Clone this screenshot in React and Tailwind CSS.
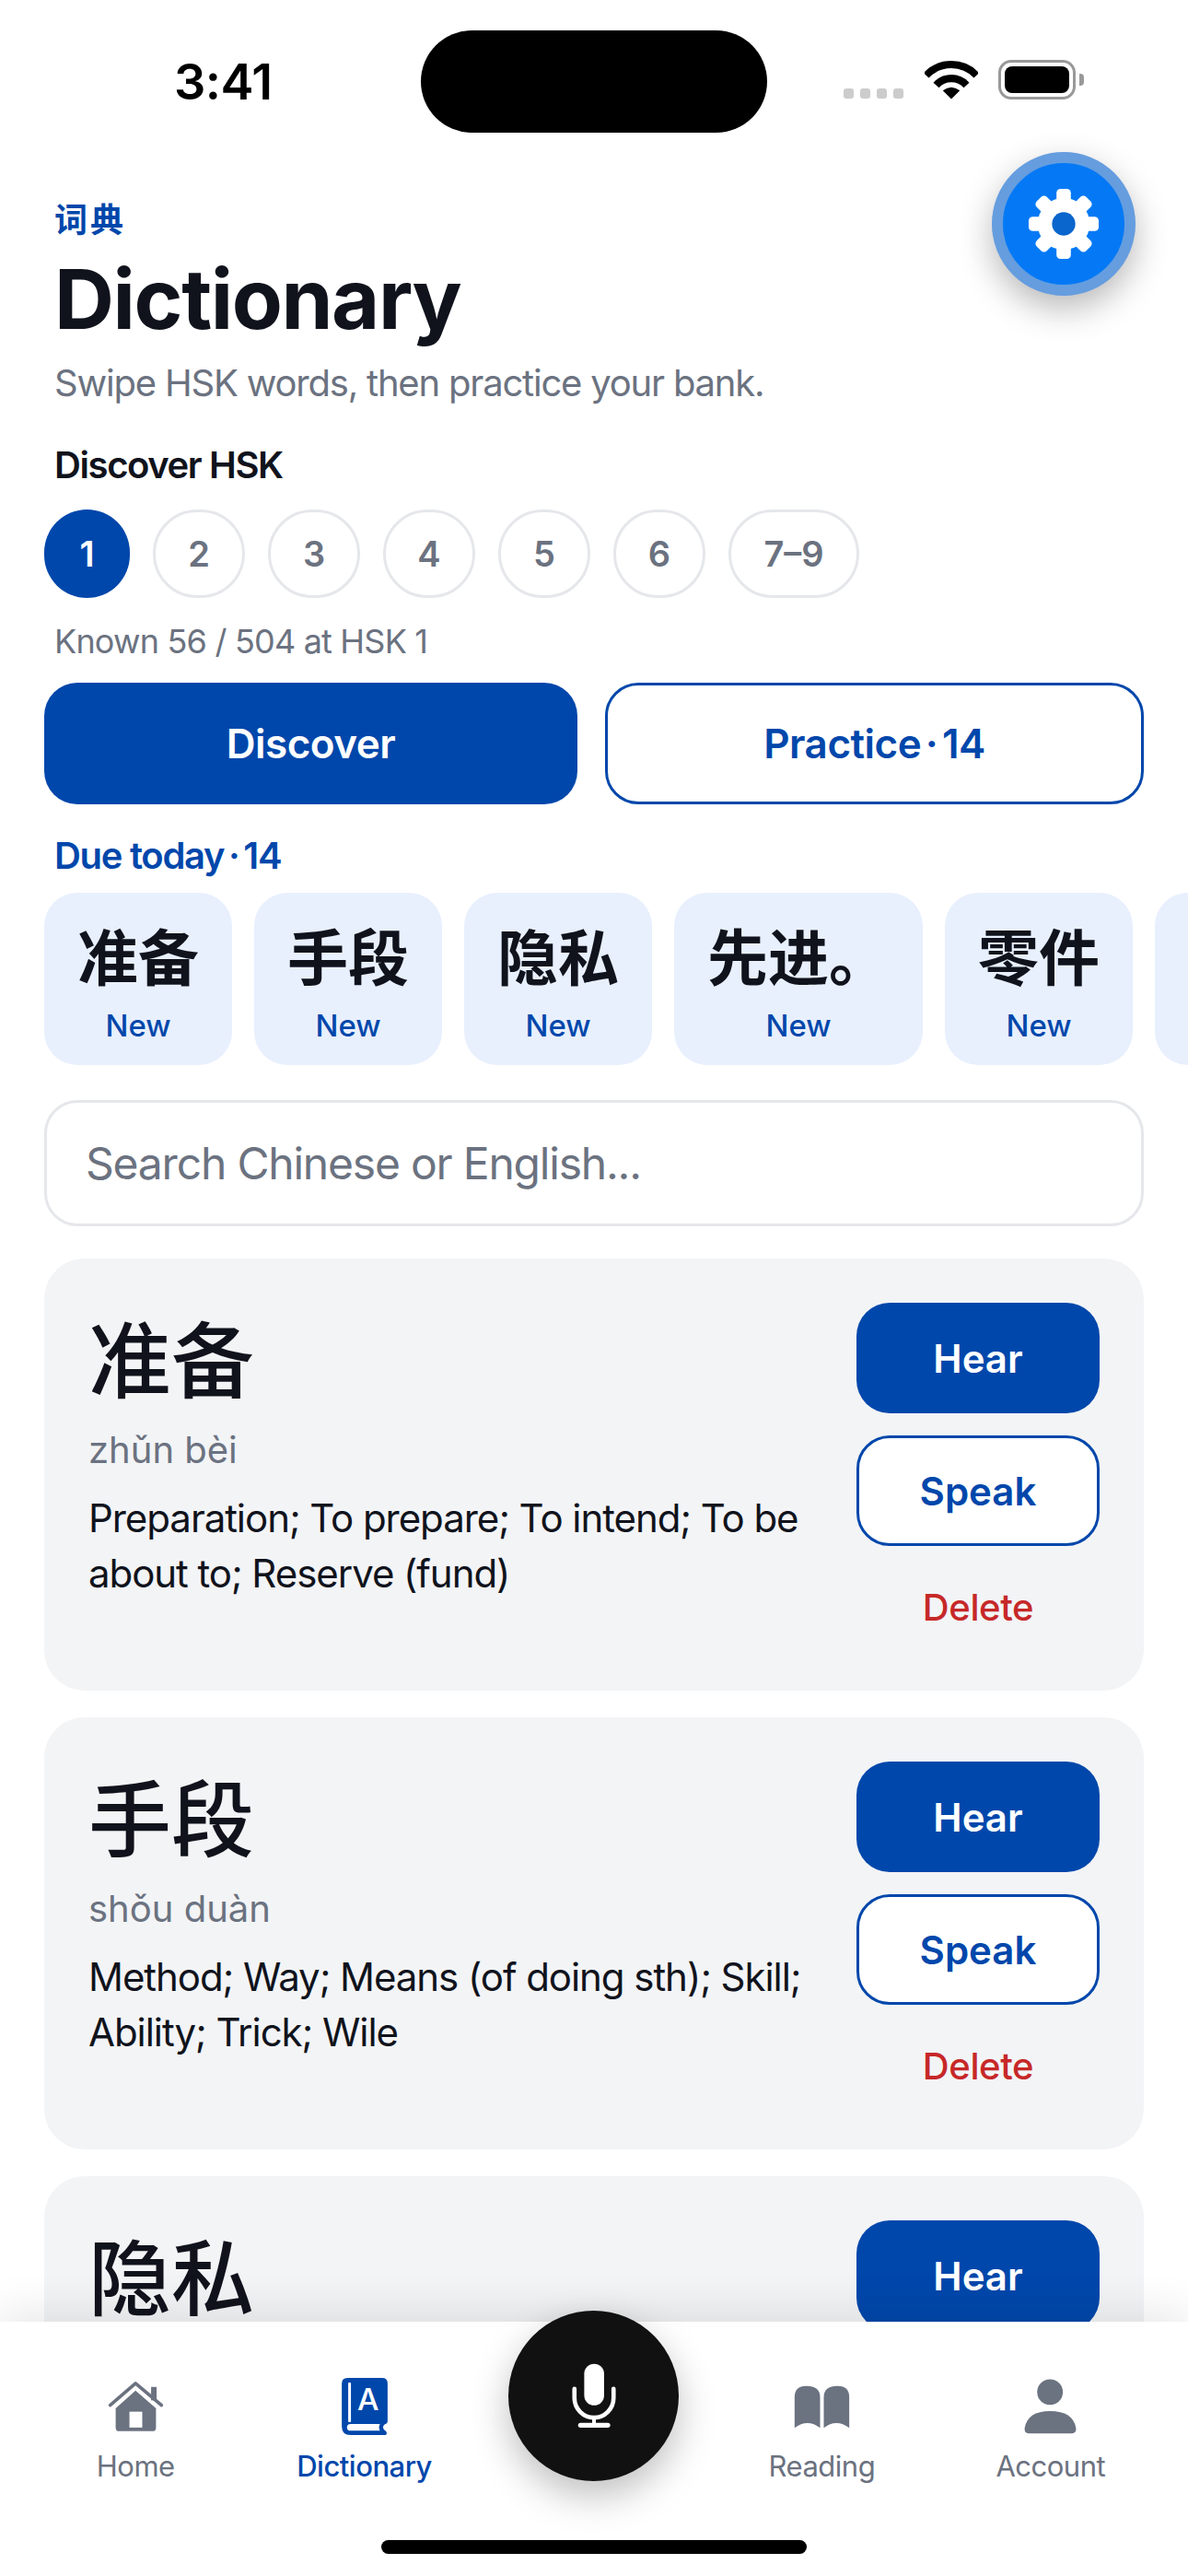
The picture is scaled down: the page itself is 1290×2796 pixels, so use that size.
import React from 'react';

const LEVELS = ['2', '3', '4', '5', '6', '7–9'];
const DUE = ['准备', '手段', '隐私', '先进。', '零件'];
const WORDS = [
  { han: '准备', pinyin: 'zhǔn bèi', def: 'Preparation; To prepare; To intend; To be about to; Reserve (fund)' },
  { han: '手段', pinyin: 'shǒu duàn', def: 'Method; Way; Means (of doing sth); Skill; Ability; Trick; Wile' },
  { han: '隐私' },
];

const Wifi = () => (
  <svg viewBox="370 133 176 130" className="w-[58px] h-[43px]" fill="none" stroke="#000">
    <path d="M375 184A114 114 0 0 1 541 184" strokeWidth="24" />
    <path d="M408 216A68 68 0 0 1 508 216" strokeWidth="25" />
    <path d="M458 262L430 234Q458 212 486 234Z" fill="#000" stroke="none" />
  </svg>
);

const Gear = () => (
  <svg viewBox="-40 -40 80 80" className="w-[78px] h-[78px]">
    {[0, 45, 90, 135, 180, 225, 270, 315].map((a) => (
      <rect key={a} x="-8" y="-39" width="16" height="24" rx="4.5" fill="#fff" transform={`rotate(${a})`} />
    ))}
    <circle r="29" fill="#fff" />
    <circle r="13" fill="#0a66cc" />
  </svg>
);

const HomeIcon = () => (
  <svg viewBox="82 72 184 168" className="w-[61px] h-[56px]">
    <rect x="224" y="92" width="18" height="44" fill="#6b7280" />
    <path d="M173 104L240 162V225Q240 237 228 237H120Q108 237 108 225V162Z" fill="#6b7280" />
    <path d="M90 152L173 80L258 152" fill="none" stroke="#6b7280" strokeWidth="11" strokeLinecap="round" strokeLinejoin="round" />
    <rect x="153" y="173" width="42" height="52" fill="#fff" />
  </svg>
);

const BookIcon = () => (
  <svg viewBox="843 63 150 187" className="w-[50px] h-[62px]">
    <path d="M862 63H975Q993 63 993 81V205Q993 213 982 216Q972 228 988 238Q995 250 980 250H872Q843 250 843 222V82Q843 63 862 63Z" fill="#0047ab" />
    <rect x="864" y="78" width="9" height="130" rx="3" fill="#fff" />
    <path d="M872 214H968Q962 226 968 236H872Q860 236 860 225Q860 214 872 214Z" fill="#fff" />
    <text x="929" y="170" textAnchor="middle" fontSize="100" fontWeight="500" fill="#fff" fontFamily="Inter, sans-serif">A</text>
  </svg>
);

const ReadingIcon = () => (
  <svg viewBox="128 83 182 141" className="w-[61px] h-[47px]" fill="#6b7280">
    <path d="M130 122Q130 85 168 85Q213 85 213 122V222Q172 190 130 222Z" />
    <path d="M308 122Q308 85 270 85Q225 85 225 122V222Q266 190 308 222Z" />
  </svg>
);

const AccountIcon = () => (
  <svg viewBox="880 65 172 180" className="w-[57px] h-[60px]" fill="#6b7280">
    <circle cx="965" cy="108" r="42" />
    <path d="M882 225Q892 170 965 170Q1040 170 1050 225Q1052 243 1035 243H897Q880 243 882 225Z" />
  </svg>
);

const MicIcon = () => (
  <svg viewBox="245 198 144 214" className="w-[48px] h-[71px]" fill="none" stroke="#fff" strokeLinecap="round">
    <rect x="285" y="200" width="65" height="136" rx="32.5" fill="#fff" stroke="none" />
    <path d="M253 282V312A64 64 0 0 0 381 312V282" strokeWidth="14" />
    <path d="M317 376V400" strokeWidth="12" />
    <path d="M273 401H362" strokeWidth="16" />
  </svg>
);

const NavItem = ({ icon, label, active }) => (
  <div className="flex flex-col items-center">
    <div className="h-[64px] flex items-center justify-center">{icon}</div>
    <span className={`mt-[11px] text-[31px] leading-[44px] tracking-[-0.5px] ${active ? 'text-[#0047ab] font-medium' : 'text-[#6b7280]'}`}>{label}</span>
  </div>
);

// the third card runs under the nav bar, only its title and first button show
const WordCard = ({ han, pinyin, def }) => (
  <div className="flex justify-between h-[469px] shrink-0 rounded-[44px] bg-[#f3f4f6] pl-[48px] pr-[48px] pt-[48px]">
    <div className="w-[800px]">
      <div className="mt-[4px] text-[90px] leading-[120px] font-medium text-[#10131c]">{han}</div>
      {pinyin && <div className="mt-[12px] text-[40px] leading-[48px] text-[#6b7280]">{pinyin}</div>}
      {def && <div className="mt-[20px] text-[42px] leading-[60px] text-[#10131c] tracking-[-1.05px]">{def}</div>}
    </div>
    <div className="w-[264px] shrink-0 flex flex-col">
      <button className="h-[120px] rounded-[36px] bg-[#0047ab] text-white text-[42px] font-semibold">Hear</button>
      {def && (
        <>
          <button className="mt-[24px] h-[120px] rounded-[36px] border-[3px] border-[#0047ab] bg-white text-[#0047ab] text-[42px] font-semibold">Speak</button>
          <button className="mt-[43px] h-[48px] text-[40px] leading-[48px] font-medium tracking-[-0.4px] text-[#c62828]">Delete</button>
        </>
      )}
    </div>
  </div>
);

export default function App() {
  return (
    <div
      className="relative w-[1290px] h-[2796px] overflow-hidden bg-white"
      style={{ fontFamily: 'Inter, "Noto Sans CJK SC", sans-serif' }}
    >
      {/* Status bar */}
      <div className="flex items-center h-[111px] mt-[33px] pl-[189px]">
        <span className="w-[268px] text-[54px] font-semibold leading-none text-black tracking-[-0.5px]">3:41</span>
        <div className="w-[376px] h-[111px] rounded-full bg-black" />
        <div className="ml-[83px] flex items-end gap-[7px] h-[43px] -mt-[4px]">
          <div className="flex gap-[7px] mb-[1px]">
            {[0, 1, 2, 3].map((i) => <div key={i} className="w-[11px] h-[11px] rounded-[3px] bg-[#cccccc]" />)}
          </div>
          <div className="ml-[16px]"><Wifi /></div>
          <div className="ml-[15px] flex items-center">
            <div className="w-[84px] h-[43px] rounded-[14px] border-[3px] border-[#999999] p-[4px]">
              <div className="w-full h-full rounded-[8px] bg-black" />
            </div>
            <div className="ml-[4px] w-[5px] h-[13px] rounded-r-[4px] bg-[#999999]" />
          </div>
        </div>
      </div>

      {/* Settings button */}
      <div className="absolute left-[1077px] top-[165px] w-[156px] h-[156px] rounded-full border-[12px] border-[#659ddf] bg-[#0579f5] flex items-center justify-center shadow-[0_14px_36px_rgba(0,0,0,0.28)]">
        <Gear />
      </div>

      <div className="px-[48px]">
        <div className="pl-[11px]">
          <div className="mt-[75px] text-[36px] leading-[40px] font-bold tracking-[3px] text-[#0047ab]">词典</div>
          <h1 className="mt-[16px] text-[90px] leading-[100px] font-bold text-[#10131c] tracking-[-1.4px]">Dictionary</h1>
          <p className="mt-[16px] text-[40px] leading-[50px] text-[#6b7280] tracking-[-1.2px]">Swipe HSK words, then practice your bank.</p>
          <p className="mt-[39px] text-[40px] leading-[50px] font-semibold text-[#10131c] tracking-[-1.4px]">Discover HSK</p>
        </div>

        <div className="mt-[23px] flex gap-[25px] h-[96px]">
          <div className="w-[93px] rounded-full bg-[#0047ab] text-white text-[38px] font-semibold flex items-center justify-center">1</div>
          {LEVELS.map((l) => (
            <div key={l} className={`${l.length > 1 ? 'w-[142px]' : 'w-[100px]'} rounded-full border-[3px] border-[#e5e7eb] text-[#6b7280] text-[38px] font-semibold flex items-center justify-center`}>{l}</div>
          ))}
        </div>

        <p className="mt-[25px] pl-[11px] text-[36px] leading-[44px] text-[#6b7280] tracking-[-0.8px]">Known 56 / 504 at HSK 1</p>

        <div className="mt-[23px] grid grid-cols-[579px_1fr] gap-[30px] h-[132px]">
          <button className="rounded-[36px] bg-[#0047ab] text-white text-[44px] font-semibold tracking-[-0.5px]">Discover</button>
          <button className="rounded-[36px] border-[3px] border-[#0047ab] bg-white text-[#0047ab] text-[44px] font-semibold tracking-[-0.5px] [word-spacing:-6px]">Practice · 14</button>
        </div>

        <p className="mt-[31px] pl-[11px] text-[40px] leading-[50px] font-semibold text-[#0047ab] tracking-[-1.3px]">
          Due today<span className="mx-[-4px]"> · </span>14
        </p>

        <div className="mt-[15px] flex gap-[24px] h-[187px] w-[1400px]">
          {DUE.map((w) => (
            <div key={w} className="shrink-0 rounded-[36px] bg-[#e8f0fe] px-[36px] pt-[30px] flex flex-col items-center h-full">
              <div className="text-[66px] leading-[82px] font-bold text-[#10131c] whitespace-nowrap">{w}</div>
              <div className="mt-[12px] text-[33px] leading-[40px] font-medium text-[#0047ab]">New</div>
            </div>
          ))}
          <div className="shrink-0 w-[204px] rounded-[36px] bg-[#e8f0fe]" />
        </div>

        <div className="mt-[38px] h-[137px] rounded-[36px] border-[3px] border-[#e5e7eb] flex items-center pl-[42px] text-[48px] text-[#6b7280] tracking-[-1.2px]">
          Search Chinese or English...
        </div>

        <div className="mt-[35px] flex flex-col gap-[29px]">
          {WORDS.map((w) => <WordCard key={w.han} {...w} />)}
        </div>
      </div>

      {/* Bottom nav */}
      <div className="absolute left-0 right-0 bottom-0 h-[276px] bg-white shadow-[0_-12px_44px_rgba(0,0,0,0.09)]">
        <div className="grid grid-cols-5 pl-[23px] pr-[25px] pt-[60px]">
          <NavItem icon={<HomeIcon />} label="Home" />
          <NavItem icon={<BookIcon />} label="Dictionary" active />
          <div />
          <NavItem icon={<ReadingIcon />} label="Reading" />
          <NavItem icon={<AccountIcon />} label="Account" />
        </div>
        <div className="absolute left-[552px] -top-[12px] w-[185px] h-[185px] rounded-full bg-[#111111] flex items-center justify-center shadow-[0_16px_40px_rgba(0,0,0,0.25)]">
          <MicIcon />
        </div>
        <div className="absolute left-[414px] bottom-[24px] w-[462px] h-[15px] rounded-full bg-black" />
      </div>
    </div>
  );
}
